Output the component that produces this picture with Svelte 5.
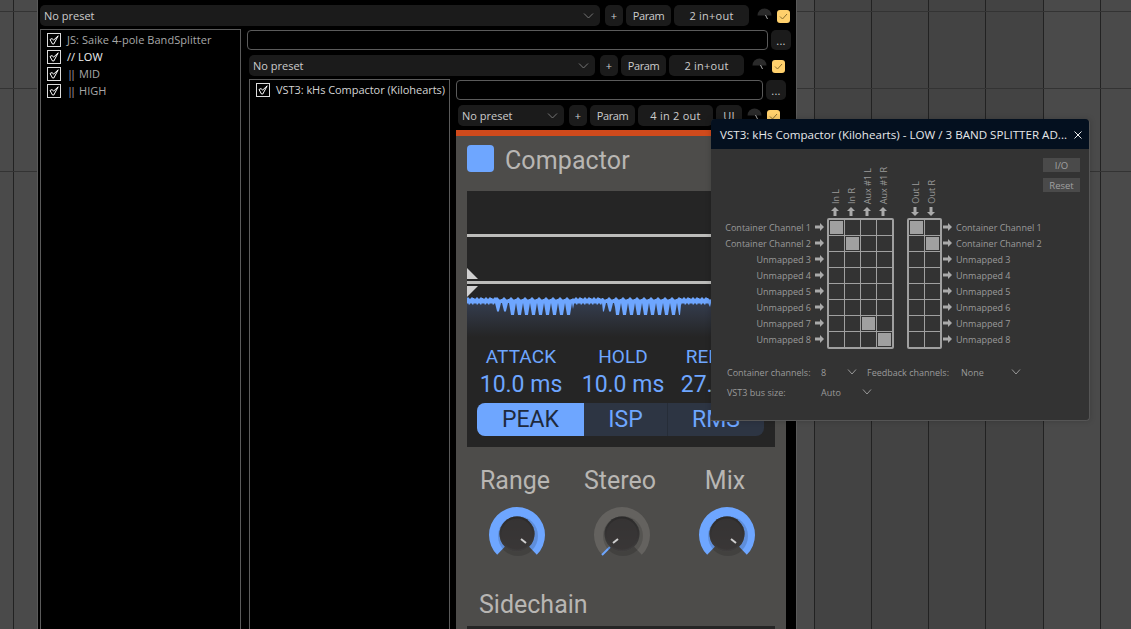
<script>
  const inLabels = ['In L', 'In R', 'Aux #1 L', 'Aux #1 R'];
  const outLabels = ['Out L', 'Out R'];
  const rows = ['Container Channel 1', 'Container Channel 2', 'Unmapped 3', 'Unmapped 4', 'Unmapped 5', 'Unmapped 6', 'Unmapped 7', 'Unmapped 8'];
  const inOn = { 0: 0, 1: 1, 6: 2, 7: 3 };
  const outOn = { 0: 0, 1: 1 };

  function wave() {
    const w = 308;
    const pts = [];
    for (let x = 0; x <= w; x += 1) {
      const p = x % 107;
      const sparse = p <= 28;
      const jag = sparse ? [1, 0, 1, 2, 1, 0, 1, 1, 2][x % 9] : [2, 1, 0, 1, 2, 3, 2][x % 7];
      pts.push(`${x},${8 + jag}`);
    }
    const low = [];
    for (let x = w; x >= 0; x -= 1) {
      const p = x % 107;
      const ph = x % 7;
      let y;
      if (p > 41) {
        y = [14, 20, 26, 26, 26, 26, 20][ph];
      } else if (p > 28) {
        y = [14, 18, 22, 23, 22, 18, 14][ph];
      } else {
        y = 14 + [1, 0, 2, 1, 0, 1, 2, 0][x % 8];
      }
      low.push(`${x},${y}`);
    }
    return 'M' + pts.join(' L') + ' L' + low.join(' L') + ' Z';
  }
  const wavePath = wave();
</script>

{#snippet toolbar(ui)}
  <div class="toolbar">
    <div class="select"><span>No preset</span><svg width="11" height="6" viewBox="0 0 11 6"><path d="M1 .5l4.500 4.500L10 .5" fill="none" stroke="#777" /></svg></div>
    <button class="btn plus">+</button>
    <button class="btn param">Param</button>
    <button class="btn io">{ui ? '4 in 2 out' : '2 in+out'}</button>
    {#if ui}<button class="btn uib">UI</button>{/if}
    <svg class="dome" width="15" height="13" viewBox="0 0 15 13">
      <path d="M.5 8.500a7 7 0 0 1 14 0z" fill="#2a2a2a" />
      <path d="M8.500 8l2 4" stroke="#aaa" stroke-width="1" />
    </svg>
    <div class="enable"><svg width="9" height="7" viewBox="0 0 9 7"><path d="M1 3.500L3.500 6 8 1" fill="none" stroke="#8a6f2e" /></svg></div>
  </div>
{/snippet}

{#snippet item(label, cls)}
  <div class="fxitem {cls}">
    <svg width="14" height="14" viewBox="0 0 14 14">
      <rect x=".5" y=".5" width="13" height="13" fill="none" stroke="#ddd" />
      <path d="M3 6.500L5.200 5.500 6.500 7.200 11.200 2.800 6.800 11 5.500 11Z" fill="none" stroke="#fff" stroke-width="1" stroke-linejoin="round" />
    </svg>
    {#if label.startsWith('||')}
      <span><span class="pipes">||</span> {label.slice(3)}</span>
    {:else}
      <span>{label}</span>
    {/if}
  </div>
{/snippet}

{#snippet nameRow()}
  <div class="namerow">
    <div class="nameinput"></div>
    <button class="btn dots">...</button>
  </div>
{/snippet}

{#snippet knob(label, stereo)}
  <div class="knobcell">
    <div class="knoblabel">{label}</div>
    <svg width="60" height="60" viewBox="0 0 60 60">
      <defs>
        <linearGradient id="kg" x1="0" y1="0" x2="0" y2="1"><stop offset="0" stop-color="#2b2a2a" /><stop offset="1" stop-color="#3f3d3d" /></linearGradient>
      </defs>
      <path d="M10.200 50.800A28 28 0 1 1 49.800 50.800L30 30Z" fill={stereo ? '#64625f' : '#6ea6ff'} />
      {#if stereo}<path d="M10 51L18 43" stroke="#6ea6ff" stroke-width="2" />{/if}
      <circle cx="31" cy="32" r="20" fill="#000" opacity=".14" />
      <circle cx="30" cy="30" r="17.500" fill="#4d4c4a" />
      <circle cx="30" cy="30" r="17.500" fill="url(#kg)" />
      <circle cx="30" cy="30" r="15.500" fill="#383636" opacity=".8" />
      <path d={stereo ? 'M21 39L26 35' : 'M34 35L39 39'} stroke="#cfcfcf" stroke-width="2" />
    </svg>
  </div>
{/snippet}

<div class="desk">
  <div class="panel">
    {@render toolbar(false)}
    <div class="split">
      <div class="fxlist">
        {@render item('JS: Saike 4-pole BandSplitter', '')}
        {@render item('// LOW', 'sel')}
        {@render item('|| MID', '')}
        {@render item('|| HIGH', '')}
      </div>
      <div class="inner">
        {@render nameRow()}
        <div class="indent">
          {@render toolbar(false)}
          <div class="split second">
            <div class="fxlist">
              {@render item('VST3: kHs Compactor (Kilohearts)', 'plain')}
            </div>
            <div class="inner third">
              {@render nameRow()}
              <div class="indent">
                {@render toolbar(true)}
              </div>
              <div class="plugin">
                <div class="orange"></div>
                <div class="pluginbody">
                  <div class="head"><div class="logo"></div><div class="pname">Compactor</div></div>
                  <div class="display">
                    <div class="graph">
                      <div class="gline l1"></div>
                      <svg class="tri" width="12" height="12" viewBox="0 0 12 12"><path d="M0 0L11 11H0Z" fill="#d0d0d0" /></svg>
                      <div class="gline l2"></div>
                      <svg class="tri t2" width="12" height="11" viewBox="0 0 12 11"><path d="M0 0H11L0 11Z" fill="#d0d0d0" /></svg>
                      <svg class="wave" width="308" height="48" viewBox="0 0 308 48">
                        <defs><linearGradient id="wg" x1="0" y1="0" x2="0" y2="1"><stop offset="0" stop-color="#363f52" /><stop offset="1" stop-color="#252525" /></linearGradient></defs>
                        <rect y="10" width="308" height="38" fill="url(#wg)" />
                        <path d={wavePath} fill="#6ea6ff" />
                      </svg>
                    </div>
                    <div class="times">
                      <div class="tcol"><span class="tl">ATTACK</span><span class="tv">10.0 ms</span></div>
                      <div class="tcol"><span class="tl">HOLD</span><span class="tv">10.0 ms</span></div>
                      <div class="tcol"><span class="tl">RELEASE</span><span class="tv last">27.0 ms</span></div>
                    </div>
                    <div class="modes">
                      <div class="mode on">PEAK</div>
                      <div class="mode isp">ISP</div>
                      <div class="mode">RMS</div>
                    </div>
                  </div>
                  <div class="knobs">
                    {@render knob('Range', false)}
                    {@render knob('Stereo', true)}
                    {@render knob('Mix', false)}
                  </div>
                  <div class="side">Sidechain</div>
                  <div class="sidepanel"></div>
                </div>
              </div>
            </div>
          </div>
        </div>
      </div>
    </div>
  </div>

  <div class="dialog">
    <div class="title">
      <span>VST3: kHs Compactor (Kilohearts) - LOW / 3 BAND SPLITTER AD...</span>
      <svg width="8" height="8" viewBox="0 0 8 8"><path d="M.5.5l7 7M7.500.5l-7 7" stroke="#eee" /></svg>
    </div>
    <div class="dbody">
      <div class="side-btns"><div class="gbtn">I/O</div><div class="gbtn">Reset</div></div>
      <div class="routing">
        <div class="rowlabels left">
          {#each rows as r}
            <div class="rl"><span>{r}</span><svg width="9" height="8" viewBox="0 0 9 8"><path d="M0 2.500H5V0L9 4 5 8V5.500H0Z" fill="#aaa" /></svg></div>
          {/each}
        </div>
        <div class="matrixcol">
          <div class="heads">
            {#each inLabels as l}
              <div class="hd"><span>{l}</span><svg width="8" height="9" viewBox="0 0 8 9"><path d="M2.500 9V4H0L4 0 8 4H5.500V9Z" fill="#aaa" /></svg></div>
            {/each}
          </div>
          <div class="matrix four">
            {#each rows as r, i}
              {#each inLabels as l, j}
                <div class="cell"><div class:fill={inOn[i] === j}></div></div>
              {/each}
            {/each}
          </div>
        </div>
        <div class="matrixcol outc">
          <div class="heads">
            {#each outLabels as l}
              <div class="hd"><span>{l}</span><svg width="8" height="9" viewBox="0 0 8 9"><path d="M2.500 0V5H0L4 9 8 5H5.500V0Z" fill="#aaa" /></svg></div>
            {/each}
          </div>
          <div class="matrix two">
            {#each rows as r, i}
              {#each outLabels as l, j}
                <div class="cell"><div class:fill={outOn[i] === j}></div></div>
              {/each}
            {/each}
          </div>
        </div>
        <div class="rowlabels right">
          {#each rows as r}
            <div class="rl"><svg width="9" height="8" viewBox="0 0 9 8"><path d="M0 2.500H5V0L9 4 5 8V5.500H0Z" fill="#aaa" /></svg><span>{r}</span></div>
          {/each}
        </div>
      </div>
      <div class="opts">
        <span class="ol">Container channels:</span><span class="ov w1">8</span>
        <svg class="cv" width="10" height="6" viewBox="0 0 10 6"><path d="M1 .5l4 4.500 4-4.500" fill="none" stroke="#999" /></svg>
        <span class="ol">Feedback channels:</span><span class="ov w2">None</span>
        <svg class="cv" width="10" height="6" viewBox="0 0 10 6"><path d="M1 .5l4 4.500 4-4.500" fill="none" stroke="#999" /></svg>
      </div>
      <div class="opts second-o">
        <span class="ol">VST3 bus size:</span><span class="ov w3">Auto</span>
        <svg class="cv" width="10" height="6" viewBox="0 0 10 6"><path d="M1 .5l4 4.500 4-4.500" fill="none" stroke="#999" /></svg>
      </div>
    </div>
  </div>
</div>

<style>
  :global(body) { margin: 0; background: #444; }
  .desk {
    position: relative;
    width: 1131px;
    height: 629px;
    overflow: hidden;
    font-family: "Open Sans", "Noto Sans", sans-serif;
    background:
      linear-gradient(#333, #333) 0 11px / 100% 1px no-repeat,
      linear-gradient(#333, #333) 0 88px / 100% 1px no-repeat,
      linear-gradient(#333, #333) 0 171px / 100% 1px no-repeat,
      linear-gradient(#222, #222) 13px 0 / 1px 100% no-repeat,
      linear-gradient(#222, #222) 814px 0 / 1px 100% no-repeat,
      linear-gradient(#222, #222) 871px 0 / 1px 100% no-repeat,
      linear-gradient(#222, #222) 928px 0 / 1px 100% no-repeat,
      linear-gradient(#222, #222) 985px 0 / 1px 100% no-repeat,
      linear-gradient(#222, #222) 1043px 0 / 1px 100% no-repeat,
      linear-gradient(#222, #222) 1100px 0 / 1px 100% no-repeat,
      linear-gradient(90deg, #4a4a4a 0 814px, #434343 814px 1043px, #4a4a4a 1043px);
  }
  .panel {
    box-sizing: border-box;
    margin-left: 37px;
    width: 760px;
    height: 629px;
    background: #000;
    border-left: 1px solid #5a5a5a;
    border-right: 1px solid #5a5a5a;
    padding: 5px 0 0 2px;
    display: flex;
    flex-direction: column;
  }
  .toolbar { display: flex; align-items: center; height: 21px; flex: none; color: #ccc; font-size: 11px; }
  .select {
    flex: 1;
    box-sizing: border-box;
    height: 21px;
    background: #1b1b1b;
    border-radius: 5px;
    display: flex;
    align-items: center;
    justify-content: space-between;
    padding: 0 4px;
    letter-spacing: 0;
  }
  .select svg { margin-right: 2px; }
  .btn {
    box-sizing: border-box;
    height: 21px;
    background: #1b1b1b;
    color: #ccc;
    border: 0;
    border-radius: 5px;
    font: inherit;
    font-size: 11px;
    padding: 0;
    letter-spacing: .25px;
  }
  .plus { width: 18px; margin-left: 5px; }
  .param { width: 45px; margin-left: 3px; letter-spacing: -.4px; }
  .io { width: 75px; margin-left: 3px; }
  .uib { width: 26px; margin-left: 3px; margin-right: -3px; }
  .dome { margin-left: 8px; margin-top: -4px; flex: none; }
  .enable {
    width: 13px; height: 13px;
    margin: 1px 6px 0 5px;
    background: #ffd06c;
    border-radius: 3px;
    display: flex; align-items: center; justify-content: center;
  }
  .split { flex: 1; display: flex; margin-top: 3px; min-height: 0; }
  .fxlist {
    box-sizing: border-box;
    flex: none;
    width: 201px;
    border: 1px solid #5a5a5a;
    border-bottom: 0;
    padding: 1px 0 0 6px;
  }
  .fxitem {
    display: flex; align-items: center; height: 17px;
    font-size: 11px; color: #a8a8a8; gap: 6px;
    letter-spacing: .05px;
    white-space: nowrap;
  }
  .fxitem svg { flex: none; }
  .pipes { letter-spacing: -3px; margin-right: 3px; }
  .fxitem.sel { color: #f0f0f0; }
  .fxitem.plain { color: #d4d4d4; letter-spacing: -.05px; }
  .inner { flex: 1; display: flex; flex-direction: column; padding: 0 5px 0 6px; min-width: 0; }
  .namerow { display: flex; height: 20px; margin-top: 1px; flex: none; }
  .nameinput { flex: 1; box-sizing: border-box; border: 1px solid #5a5a5a; border-radius: 4px; }
  .dots { width: 20px; height: 20px; margin-left: 3px; }
  .indent { margin-top: 5px; padding-left: 2px; flex: 1; display: flex; flex-direction: column; min-height: 0; }
  .third .indent { flex: none; }
  .plugin { flex: 1; margin-top: 4px; min-height: 0; background: #4d4c4a; }
  .orange { height: 6px; background: #d04a1c; }
  .pluginbody { padding: 9px 11px 0; }
  .head { display: flex; align-items: center; gap: 11px; height: 27px; }
  .logo { width: 27px; height: 27px; background: #6ea6ff; border-radius: 4px; }
  .pname { font-family: Roboto, sans-serif; font-size: 25px; color: #b8b6b3; letter-spacing: .1px; margin-top: 3px; }
  .display { margin-top: 19px; width: 308px; height: 256px; background: #252525; display: flex; flex-direction: column; }
  .graph { position: relative; height: 141px; flex: none; }
  .gline { position: absolute; left: 0; right: 0; background: #bcbcba; }
  .l1 { top: 43px; height: 3px; }
  .l2 { top: 90px; height: 3px; }
  .tri { position: absolute; left: 0; top: 77px; }
  .t2 { top: 95px; }
  .wave { position: absolute; left: 0; top: 98px; }
  .times { display: flex; padding-left: 12px; gap: 18px; font-family: Roboto, sans-serif; color: #6ea6ff; }
  .tcol { display: flex; flex-direction: column; align-items: center; width: 84px; flex: none; }
  .tl { font-size: 19px; line-height: 26px; margin-top: 12px; letter-spacing: .1px; white-space: nowrap; }
  .tv { font-size: 23px; line-height: 30px; white-space: nowrap; }
  .tv.last { margin-right: 6px; }
  .modes {
    margin: 3px 11px 0 10px;
    height: 33px;
    display: flex;
    border-radius: 8px;
    overflow: hidden;
    background: #2d3543;
    font-family: Roboto, sans-serif;
    font-size: 23px;
    color: #6ea6ff;
  }
  .mode { display: flex; align-items: center; justify-content: center; flex: 1; }
  .mode.on { flex: none; width: 107px; background: #6ea6ff; color: #1e2a3c; }
  .mode.isp { flex: none; width: 84px; border-right: 1px solid #262d38; box-sizing: border-box; }
  .knobs { display: flex; margin: 17px 0 0 -3px; }
  .knobcell { width: 105px; display: flex; flex-direction: column; align-items: center; flex: none; }
  .knoblabel { font-family: Roboto, sans-serif; font-size: 25px; line-height: 34px; color: #b8b6b3; margin-bottom: 6px; padding-right: 3px; }
  .side { font-family: Roboto, sans-serif; font-size: 25px; line-height: 30px; color: #b8b6b3; margin: 26px 0 0 12px; }
  .sidepanel { width: 308px; height: 10px; margin-top: 6px; background: #252525; }

  .dialog {
    position: absolute;
    left: 711px; top: 119px;
    box-sizing: border-box;
    width: 379px; height: 302px;
    background: #333;
    border: 1px solid #555;
    border-width: 0 1px 1px 0;
    border-radius: 4px 4px 4px 0;
    box-shadow: 0 0 6px rgba(0,0,0,.18);
  }
  .title {
    height: 30px;
    background: #04101f;
    color: #e6e8ea;
    font-size: 11.600px;
    display: flex;
    align-items: center;
    justify-content: space-between;
    padding: 0 7px 0 9px;
    white-space: nowrap;
    border-radius: 4px 4px 0 0;
  }
  .title svg { margin-top: 2px; flex: none; }
  .dbody { position: relative; height: 271px; font-size: 9px; color: #9a9a9a; }
  .side-btns { position: absolute; right: 9px; top: 9px; display: flex; flex-direction: column; gap: 6px; font-size: 9.500px; }
  .gbtn { width: 37px; height: 14px; background: #4a4a4a; color: #a0a0a0; display: flex; align-items: center; justify-content: center; }
  .routing { display: flex; align-items: flex-end; height: 200px; }
  .rowlabels { display: flex; flex-direction: column; }
  .rowlabels.left { width: 113px; margin-right: 3px; align-items: flex-end; }
  .rowlabels.right { margin-left: 1px; }
  .rl { height: 16px; display: flex; align-items: center; gap: 4px; white-space: nowrap; padding-bottom: 4px; box-sizing: border-box; }
  .matrixcol { display: flex; flex-direction: column; }
  .outc { margin-left: 13px; }
  .heads { display: flex; align-items: flex-end; }
  .hd { width: 16px; display: flex; flex-direction: column; align-items: center; gap: 3px; margin-bottom: 2px; }
  .hd span { writing-mode: vertical-rl; transform: rotate(180deg); white-space: nowrap; line-height: 11px; }
  .matrix {
    display: grid;
    grid-auto-rows: 16px;
    border: solid #a0a0a0;
    border-width: 2px 1px 1px 2px;
    border-radius: 2px;
  }
  .four { grid-template-columns: repeat(4, 16px); }
  .two { grid-template-columns: repeat(2, 16px); }
  .cell { box-sizing: border-box; border-right: 1px solid #a0a0a0; border-bottom: 1px solid #a0a0a0; padding: 1px; }
  .cell > div { width: 13px; height: 13px; }
  .cell > .fill { background: #a0a0a0; }
  .opts { display: flex; align-items: center; height: 14px; margin-left: 16px; margin-top: 16px; white-space: nowrap; }
  .second-o { margin-top: 6px; }
  .ol { width: 94px; flex: none; }
  .ov { display: inline-block; flex: none; }
  .w1 { width: 26px; }
  .w2 { width: 50px; }
  .w3 { width: 41px; }
  .cv { margin-right: 10px; flex: none; }
</style>
